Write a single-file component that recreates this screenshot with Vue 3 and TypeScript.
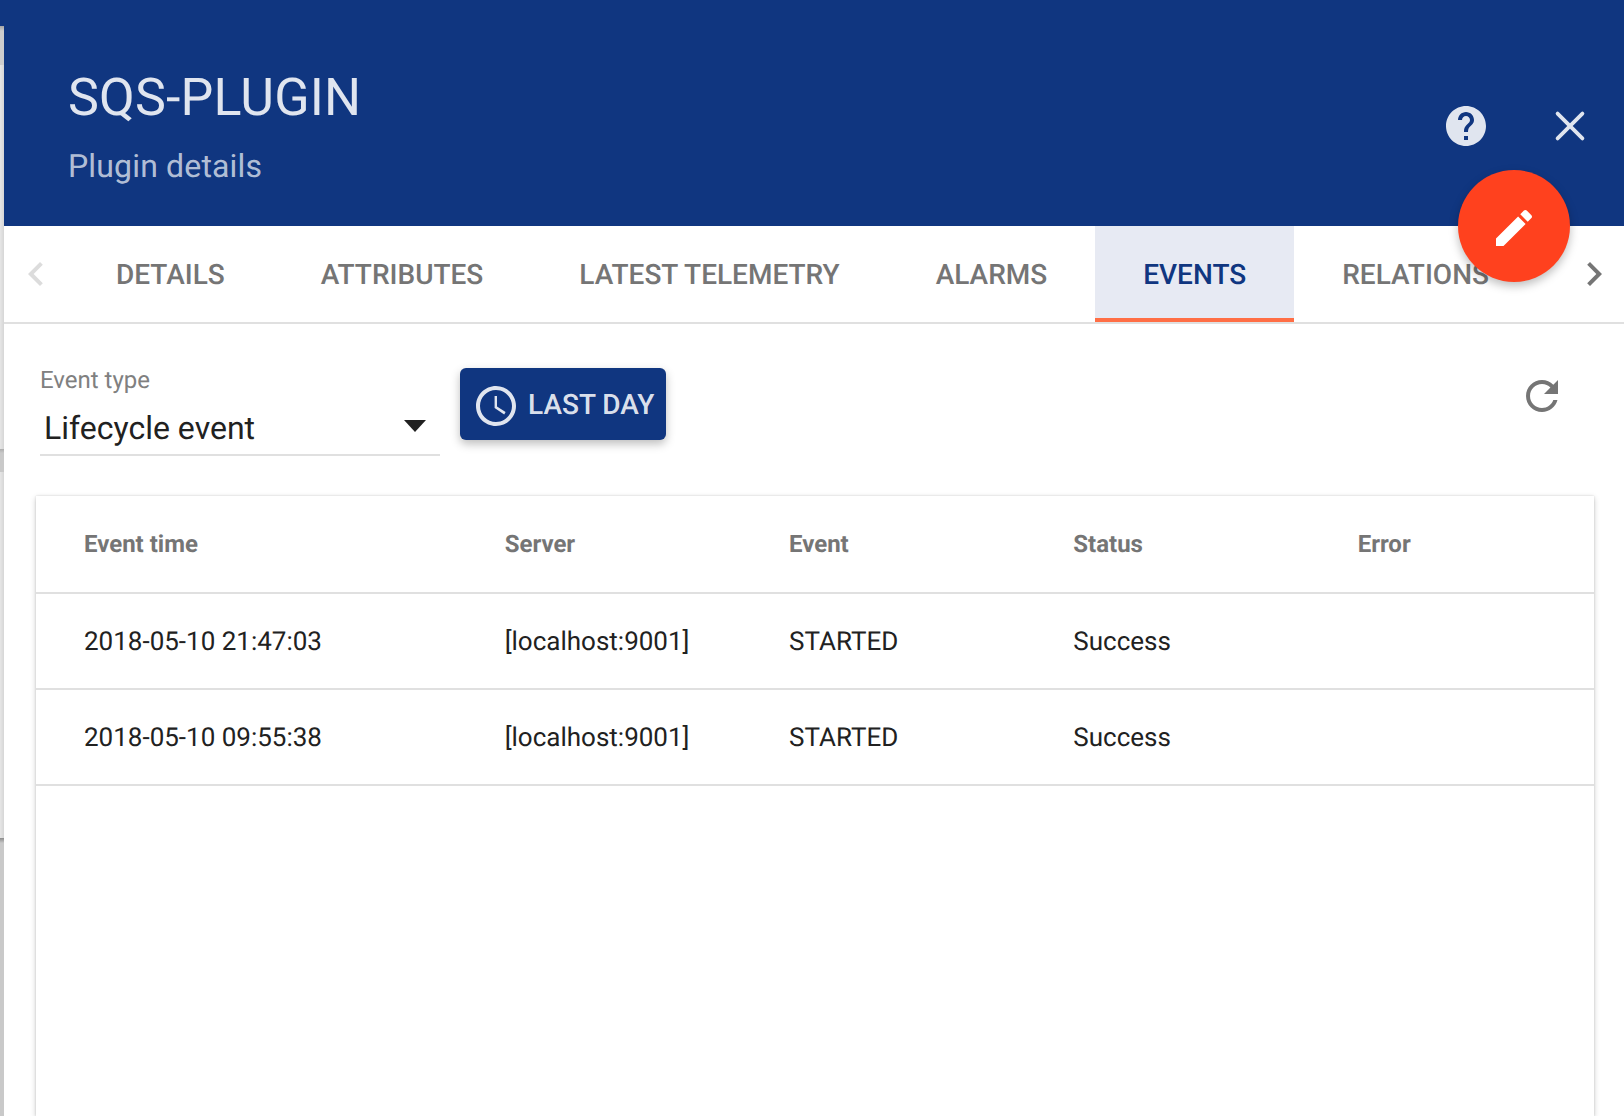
<script setup lang="ts">
import { ref } from 'vue'

interface PluginEvent {
  time: string
  server: string
  event: string
  status: string
  error: string
}

const tabs: string[] = ['Details', 'Attributes', 'Latest telemetry', 'Alarms', 'Events', 'Relations']
const activeTab = ref('Events')
const eventType = ref('Lifecycle event')

const events: PluginEvent[] = [
  { time: '2018-05-10 21:47:03', server: '[localhost:9001]', event: 'STARTED', status: 'Success', error: '' },
  { time: '2018-05-10 09:55:38', server: '[localhost:9001]', event: 'STARTED', status: 'Success', error: '' },
]
</script>

<template>
  <div class="shell">
    <div class="backdrop" aria-hidden="true">
      <div class="backdrop-toolbar"></div>
      <div class="backdrop-crumbs"></div>
      <div class="backdrop-card tall"></div>
      <div class="backdrop-gap"></div>
      <div class="backdrop-card"></div>
      <div class="backdrop-rest"></div>
    </div>

    <section class="panel">
      <header class="panel-header">
        <div class="titles">
          <h1>SQS-PLUGIN</h1>
          <p>Plugin details</p>
        </div>
        <div class="header-actions">
          <button class="icon-button" type="button" aria-label="Help">
            <svg width="48" height="48" viewBox="0 0 24 24">
              <path d="M12 2C6.48 2 2 6.48 2 12s4.480 10 10 10 10-4.480 10-10S17.520 2 12 2zm1 17h-2v-2h2v2zm2.070-7.750l-.9.920C13.450 12.900 13 13.500 13 15h-2v-.5c0-1.100.450-2.100 1.170-2.830l1.240-1.260c.370-.360.590-.860.590-1.410 0-1.100-.9-2-2-2s-2 .9-2 2H8c0-2.210 1.790-4 4-4s4 1.790 4 4c0 .880-.360 1.680-.930 2.250z" />
            </svg>
          </button>
          <button class="icon-button" type="button" aria-label="Close">
            <svg width="48" height="48" viewBox="0 0 24 24">
              <path d="M5.800 5.800L18.200 18.200M18.200 5.800L5.800 18.200" fill="none" stroke="currentColor" stroke-width="1.900" stroke-linecap="round" />
            </svg>
          </button>
        </div>
        <button class="fab" type="button" aria-label="Toggle edit mode">
          <svg width="48" height="48" viewBox="0 0 24 24">
            <path d="M3 17.250V21h3.750L17.810 9.940l-3.750-3.750L3 17.250zM20.710 7.040c.390-.390.390-1.020 0-1.410l-2.340-2.340c-.390-.390-1.020-.390-1.410 0l-1.830 1.830 3.750 3.750 1.830-1.830z" />
          </svg>
        </button>
      </header>

      <nav class="tabs">
        <button class="pager disabled" type="button" aria-label="Previous tabs" disabled>
          <svg width="48" height="48" viewBox="0 0 24 24"><path d="M15.410 7.410L14 6l-6 6 6 6 1.410-1.410L10.830 12z" /></svg>
        </button>
        <div class="tab-list" role="tablist">
          <button
            v-for="tab in tabs"
            :key="tab"
            type="button"
            role="tab"
            class="tab"
            :class="{ active: tab === activeTab }"
            :aria-selected="tab === activeTab"
            @click="activeTab = tab"
          >{{ tab }}</button>
        </div>
        <button class="pager next" type="button" aria-label="Next tabs">
          <svg width="48" height="48" viewBox="0 0 24 24"><path d="M10 6L8.590 7.410 13.170 12l-4.580 4.590L10 18l6-6z" /></svg>
        </button>
      </nav>

      <main class="content">
        <div class="filters">
          <div class="field">
            <label for="event-type">Event type</label>
            <div class="select-wrap">
              <select id="event-type" v-model="eventType">
                <option>Lifecycle event</option>
                <option>Error</option>
                <option>Statistics</option>
              </select>
              <span class="caret"></span>
            </div>
          </div>
          <button class="timewindow" type="button">
            <svg width="48" height="48" viewBox="0 0 24 24">
              <path d="M11.990 2C6.470 2 2 6.480 2 12s4.470 10 9.990 10C17.520 22 22 17.520 22 12S17.520 2 11.990 2zM12 20c-4.420 0-8-3.580-8-8s3.580-8 8-8 8 3.580 8 8-3.580 8-8 8z" />
              <path d="M12.500 7H11.300v6l4.800 3.200.7-1.200-4.300-2.700z" />
            </svg>
            <span>Last day</span>
          </button>
          <button class="icon-button refresh" type="button" aria-label="Refresh">
            <svg width="48" height="48" viewBox="0 0 24 24">
              <path d="M17.650 6.350C16.200 4.900 14.210 4 12 4c-4.420 0-7.990 3.580-7.990 8s3.570 8 7.990 8c3.730 0 6.840-2.550 7.730-6h-2.080c-.820 2.330-3.040 4-5.650 4-3.310 0-6-2.690-6-6s2.690-6 6-6c1.660 0 3.140.690 4.220 1.780L13 11h7V4l-2.350 2.350z" />
            </svg>
          </button>
        </div>

        <div class="card">
          <table>
            <colgroup>
              <col class="wide" />
              <col /><col /><col /><col />
            </colgroup>
            <thead>
              <tr>
                <th scope="col">Event time</th>
                <th scope="col">Server</th>
                <th scope="col">Event</th>
                <th scope="col">Status</th>
                <th scope="col">Error</th>
              </tr>
            </thead>
            <tbody>
              <tr v-for="row in events" :key="row.time">
                <td>{{ row.time }}</td>
                <td>{{ row.server }}</td>
                <td>{{ row.event }}</td>
                <td>{{ row.status }}</td>
                <td>{{ row.error }}</td>
              </tr>
            </tbody>
          </table>
        </div>
      </main>
    </section>
  </div>
</template>

<style>
html,
body {
  height: 100%;
  margin: 0;
}

#app {
  height: 100%;
}
</style>

<style scoped>
.shell {
  display: flex;
  min-height: 100%;
  overflow: hidden;
  font-family: Roboto, "Noto Sans", sans-serif;
  text-rendering: geometricPrecision;
  color: #212121;
  background: #103680;
}

button {
  padding: 0;
  border: 0;
  background: none;
  font: inherit;
  color: inherit;
  text-rendering: inherit;
  cursor: pointer;
}

svg {
  display: block;
  flex: none;
  fill: currentColor;
}

.backdrop {
  display: flex;
  flex-direction: column;
  width: 4px;
  flex: none;
  background: #cbcbcb;
}

.backdrop-toolbar {
  height: 26px;
  background: #103680;
}

.backdrop-crumbs {
  height: 39px;
  background: linear-gradient(#a6a6a6, #cdcdcd 5px);
}

.backdrop-card {
  height: 366px;
  background: linear-gradient(90deg, #e6e6e6, #d6d6d6);
}

.backdrop-card.tall {
  height: 384px;
}

.backdrop-gap {
  height: 23px;
  background: linear-gradient(#adadad, #c9c9c9 4px);
}

.backdrop-rest {
  flex: 1;
  background: linear-gradient(#8a8a8a, #c9c9c9 5px);
}

.panel {
  display: flex;
  flex: 1;
  flex-direction: column;
  min-width: 0;
  background: #fff;
}

.panel-header {
  position: relative;
  display: flex;
  align-items: center;
  justify-content: space-between;
  box-sizing: border-box;
  height: 226px;
  padding: 26px 30px 0 64px;
  background: #103680;
  color: rgba(255, 255, 255, 0.87);
}

.titles {
  padding-top: 4px;
  letter-spacing: 0.01em;
}

h1 {
  margin: 0;
  font-size: 52px;
  font-weight: 400;
  line-height: 76px;
}

.titles p {
  margin: 0;
  font-size: 32px;
  line-height: 60px;
  opacity: 0.8;
}

.header-actions {
  display: flex;
  gap: 56px;
}

.fab {
  position: absolute;
  right: 54px;
  bottom: -56px;
  z-index: 2;
  display: flex;
  align-items: center;
  justify-content: center;
  box-sizing: border-box;
  width: 112px;
  height: 112px;
  padding-top: 4px;
  border-radius: 50%;
  background: #ff411e;
  color: #fff;
  box-shadow: 0 4px 10px rgba(0, 0, 0, 0.26);
}

.tabs {
  display: flex;
  height: 96px;
  border-bottom: 2px solid #e0e0e0;
  color: #757575;
}

.pager {
  display: flex;
  flex: none;
  align-items: center;
  justify-content: center;
  width: 64px;
}

.pager.next {
  width: 60px;
}

.pager.disabled {
  color: #dcdcdc;
}

.tab-list {
  display: flex;
  flex: 1;
  min-width: 0;
  overflow: hidden;
}

.tab {
  flex: none;
  padding: 0 48px;
  border-bottom: 4px solid transparent;
  border-top: 4px solid transparent;
  font-size: 28px;
  font-weight: 500;
  text-transform: uppercase;
  white-space: nowrap;
}

.tab.active {
  border-bottom-color: #ff6e45;
  background: #e7eaf3;
  color: #103680;
}

.content {
  display: flex;
  flex: 1;
  flex-direction: column;
  padding: 42px 30px 0 32px;
}

.filters {
  display: flex;
  align-items: flex-start;
  padding: 0 28px 40px 4px;
}

.field {
  display: flex;
  flex-direction: column;
  width: 400px;
  margin-right: 20px;
}

label {
  font-size: 24px;
  line-height: 28px;
  color: #808080;
}

.select-wrap {
  display: flex;
  align-items: center;
  margin-top: 8px;
  border-bottom: 2px solid #e0e0e0;
}

select {
  flex: 1;
  height: 52px;
  padding: 0 0 0 4px;
  border: 0;
  appearance: none;
  background: none;
  font: inherit;
  font-size: 32px;
  text-rendering: inherit;
  color: #212121;
}

.caret {
  width: 0;
  margin: 0 14px 4px 0;
  border: 11px solid transparent;
  border-top: 12px solid #212121;
  border-bottom: 0;
}

.timewindow {
  display: flex;
  align-items: center;
  gap: 8px;
  height: 72px;
  margin-top: 2px;
  padding: 0 12px;
  border-radius: 6px;
  background: #103680;
  color: rgba(255, 255, 255, 0.87);
  font-size: 28px;
  font-weight: 500;
  text-transform: uppercase;
  box-shadow: 0 4px 10px rgba(0, 0, 0, 0.26);
}

.timewindow svg {
  margin-top: 4px;
}

.refresh {
  margin: 6px 0 0 auto;
  color: #757575;
}

.card {
  flex: 1;
  box-shadow: 0 2px 6px rgba(0, 0, 0, 0.2), 0 0 2px rgba(0, 0, 0, 0.14);
}

table {
  width: 100%;
  border-spacing: 0;
  table-layout: fixed;
}

.wide {
  width: 27%;
}

th,
td {
  box-sizing: border-box;
  height: 96px;
  padding: 2px 0 0 48px;
  border-bottom: 2px solid #e0e0e0;
  text-align: left;
  white-space: nowrap;
}

th {
  height: 98px;
  padding-top: 0;
  font-size: 24px;
  font-weight: 700;
  color: #757575;
}

td {
  font-size: 26px;
}
</style>
